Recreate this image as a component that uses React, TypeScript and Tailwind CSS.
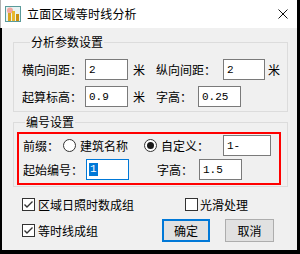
import React from "react";

const Radio = ({ checked }: { checked?: boolean }) => (
  <span className="w-[13px] h-[13px] rounded-full border border-[#333333] bg-white flex items-center justify-center shrink-0">
    {checked && <span className="w-[7px] h-[7px] rounded-full bg-[#1a1a1a]" />}
  </span>
);

const Check = ({ checked }: { checked?: boolean }) => (
  <span className="w-[13px] h-[13px] border border-[#333333] bg-white flex items-center justify-center shrink-0">
    {checked && (
      <svg width="11" height="11" viewBox="0 0 11 11">
        <path d="M1.5 5.5 L4 8 L9.5 2.5" stroke="#333333" strokeWidth="1.4" fill="none" />
      </svg>
    )}
  </span>
);

const Input = ({ value, w, focus }: { value: string; w: string; focus?: boolean }) => (
  <div
    className={`${w} h-[21px] bg-white border ${focus ? "border-[#0078d7]" : "border-[#7a7a7a]"} flex items-center pl-[2px] font-['Liberation_Mono',monospace] text-[11px] shrink-0`}
  >
    {focus ? <span className="bg-[#0078d7] text-white px-[1px] leading-[13px]">{value}</span> : <span className="pl-[1px]">{value}</span>}
  </div>
);

export default function App() {
  return (
    <div className="w-[300px] h-[254px] flex flex-col bg-[#f0f0f0] border-r-[3px] border-b-[4px] border-black font-['Noto_Sans_CJK_SC','Microsoft_YaHei',sans-serif] text-[12px] text-black leading-[14px]">
      <div className="h-[28px] bg-white flex items-center pl-[4px] pr-[8px] shrink-0 border-l border-[#b0b0b0]">
        <svg width="16" height="16" viewBox="0 0 16 16" className="shrink-0">
          <rect x="0.5" y="0.5" width="15" height="15" fill="#e8f3f3" stroke="#5a9a9a" />
          <circle cx="5" cy="4.5" r="3" fill="#f2a6a0" />
          <rect x="3" y="7" width="3" height="8" fill="#d9a520" />
          <rect x="7" y="5" width="3" height="10" fill="#e8b830" />
          <rect x="11" y="8" width="3" height="7" fill="#c99010" />
        </svg>
        <span className="ml-[6px] text-[12px] tracking-[0.2px]">立面区域等时线分析</span>
        <svg width="10" height="10" viewBox="0 0 10 10" className="ml-auto mr-[1px]">
          <path d="M0.5 0.5 L9.5 9.5 M9.5 0.5 L0.5 9.5" stroke="#111" strokeWidth="1" />
        </svg>
      </div>
      <div className="flex-1 flex flex-col border-l-2 border-black">
        <fieldset className="ml-[11px] mt-[7px] w-[275px] border border-[#dcdcdc] pl-[8px] pb-[4px]">
          <legend className="ml-[8px] px-[1px] leading-[14px]">分析参数设置</legend>
          <div className="mt-[10px] flex flex-col gap-[6px]">
            <div className="flex items-center">
              <span className="w-[63px]">横向间距：</span>
              <Input value="2" w="w-[43px]" />
              <span className="ml-[5px] w-[23px]">米</span>
              <span className="w-[67px]">纵向间距：</span>
              <Input value="2" w="w-[42px]" />
              <span className="ml-[3px]">米</span>
            </div>
            <div className="flex items-center">
              <span className="w-[63px]">起算标高：</span>
              <Input value="0.9" w="w-[43px]" />
              <span className="ml-[5px] w-[23px]">米</span>
              <span className="w-[42px]">字高：</span>
              <Input value="0.25" w="w-[43px]" />
            </div>
          </div>
        </fieldset>
        <fieldset className="ml-[11px] mt-[3px] w-[275px] border border-[#dcdcdc] pl-[3px] pb-[1px]">
          <legend className="ml-[8px] px-[1px] leading-[14px]">编号设置</legend>
          <div className="mt-[3px] w-[264px] border-2 border-[#ff0000] pl-[4px] pt-[1px] pb-[3px] flex flex-col gap-[3px]">
            <div className="flex items-center">
              <span className="w-[40px]">前缀：</span>
              <Radio />
              <span className="ml-[4px] w-[64px]">建筑名称</span>
              <Radio checked />
              <span className="ml-[4px] w-[62px]">自定义：</span>
              <Input value="1-" w="w-[48px]" />
            </div>
            <div className="flex items-center">
              <span className="w-[63px]">起始编号：</span>
              <Input value="1" w="w-[43px]" focus />
              <span className="ml-[28px] w-[42px]">字高：</span>
              <Input value="1.5" w="w-[43px]" />
            </div>
          </div>
        </fieldset>
        <div className="pl-[20px] mt-[11px] flex items-center h-[13px]">
          <Check checked />
          <span className="ml-[3px] w-[147px]">区域日照时数成组</span>
          <Check />
          <span className="ml-[2px]">光滑处理</span>
        </div>
        <div className="pl-[20px] mt-[8px] flex items-center h-[23px]">
          <Check checked />
          <span className="ml-[3px] w-[124px]">等时线成组</span>
          <button className="w-[48px] h-[23px] border-2 border-[#0078d7] bg-[#e1e1e1] flex items-center justify-center">确定</button>
          <button className="ml-[15px] w-[49px] h-[23px] border border-[#adadad] bg-[#e1e1e1] flex items-center justify-center">取消</button>
        </div>
      </div>
    </div>
  );
}
